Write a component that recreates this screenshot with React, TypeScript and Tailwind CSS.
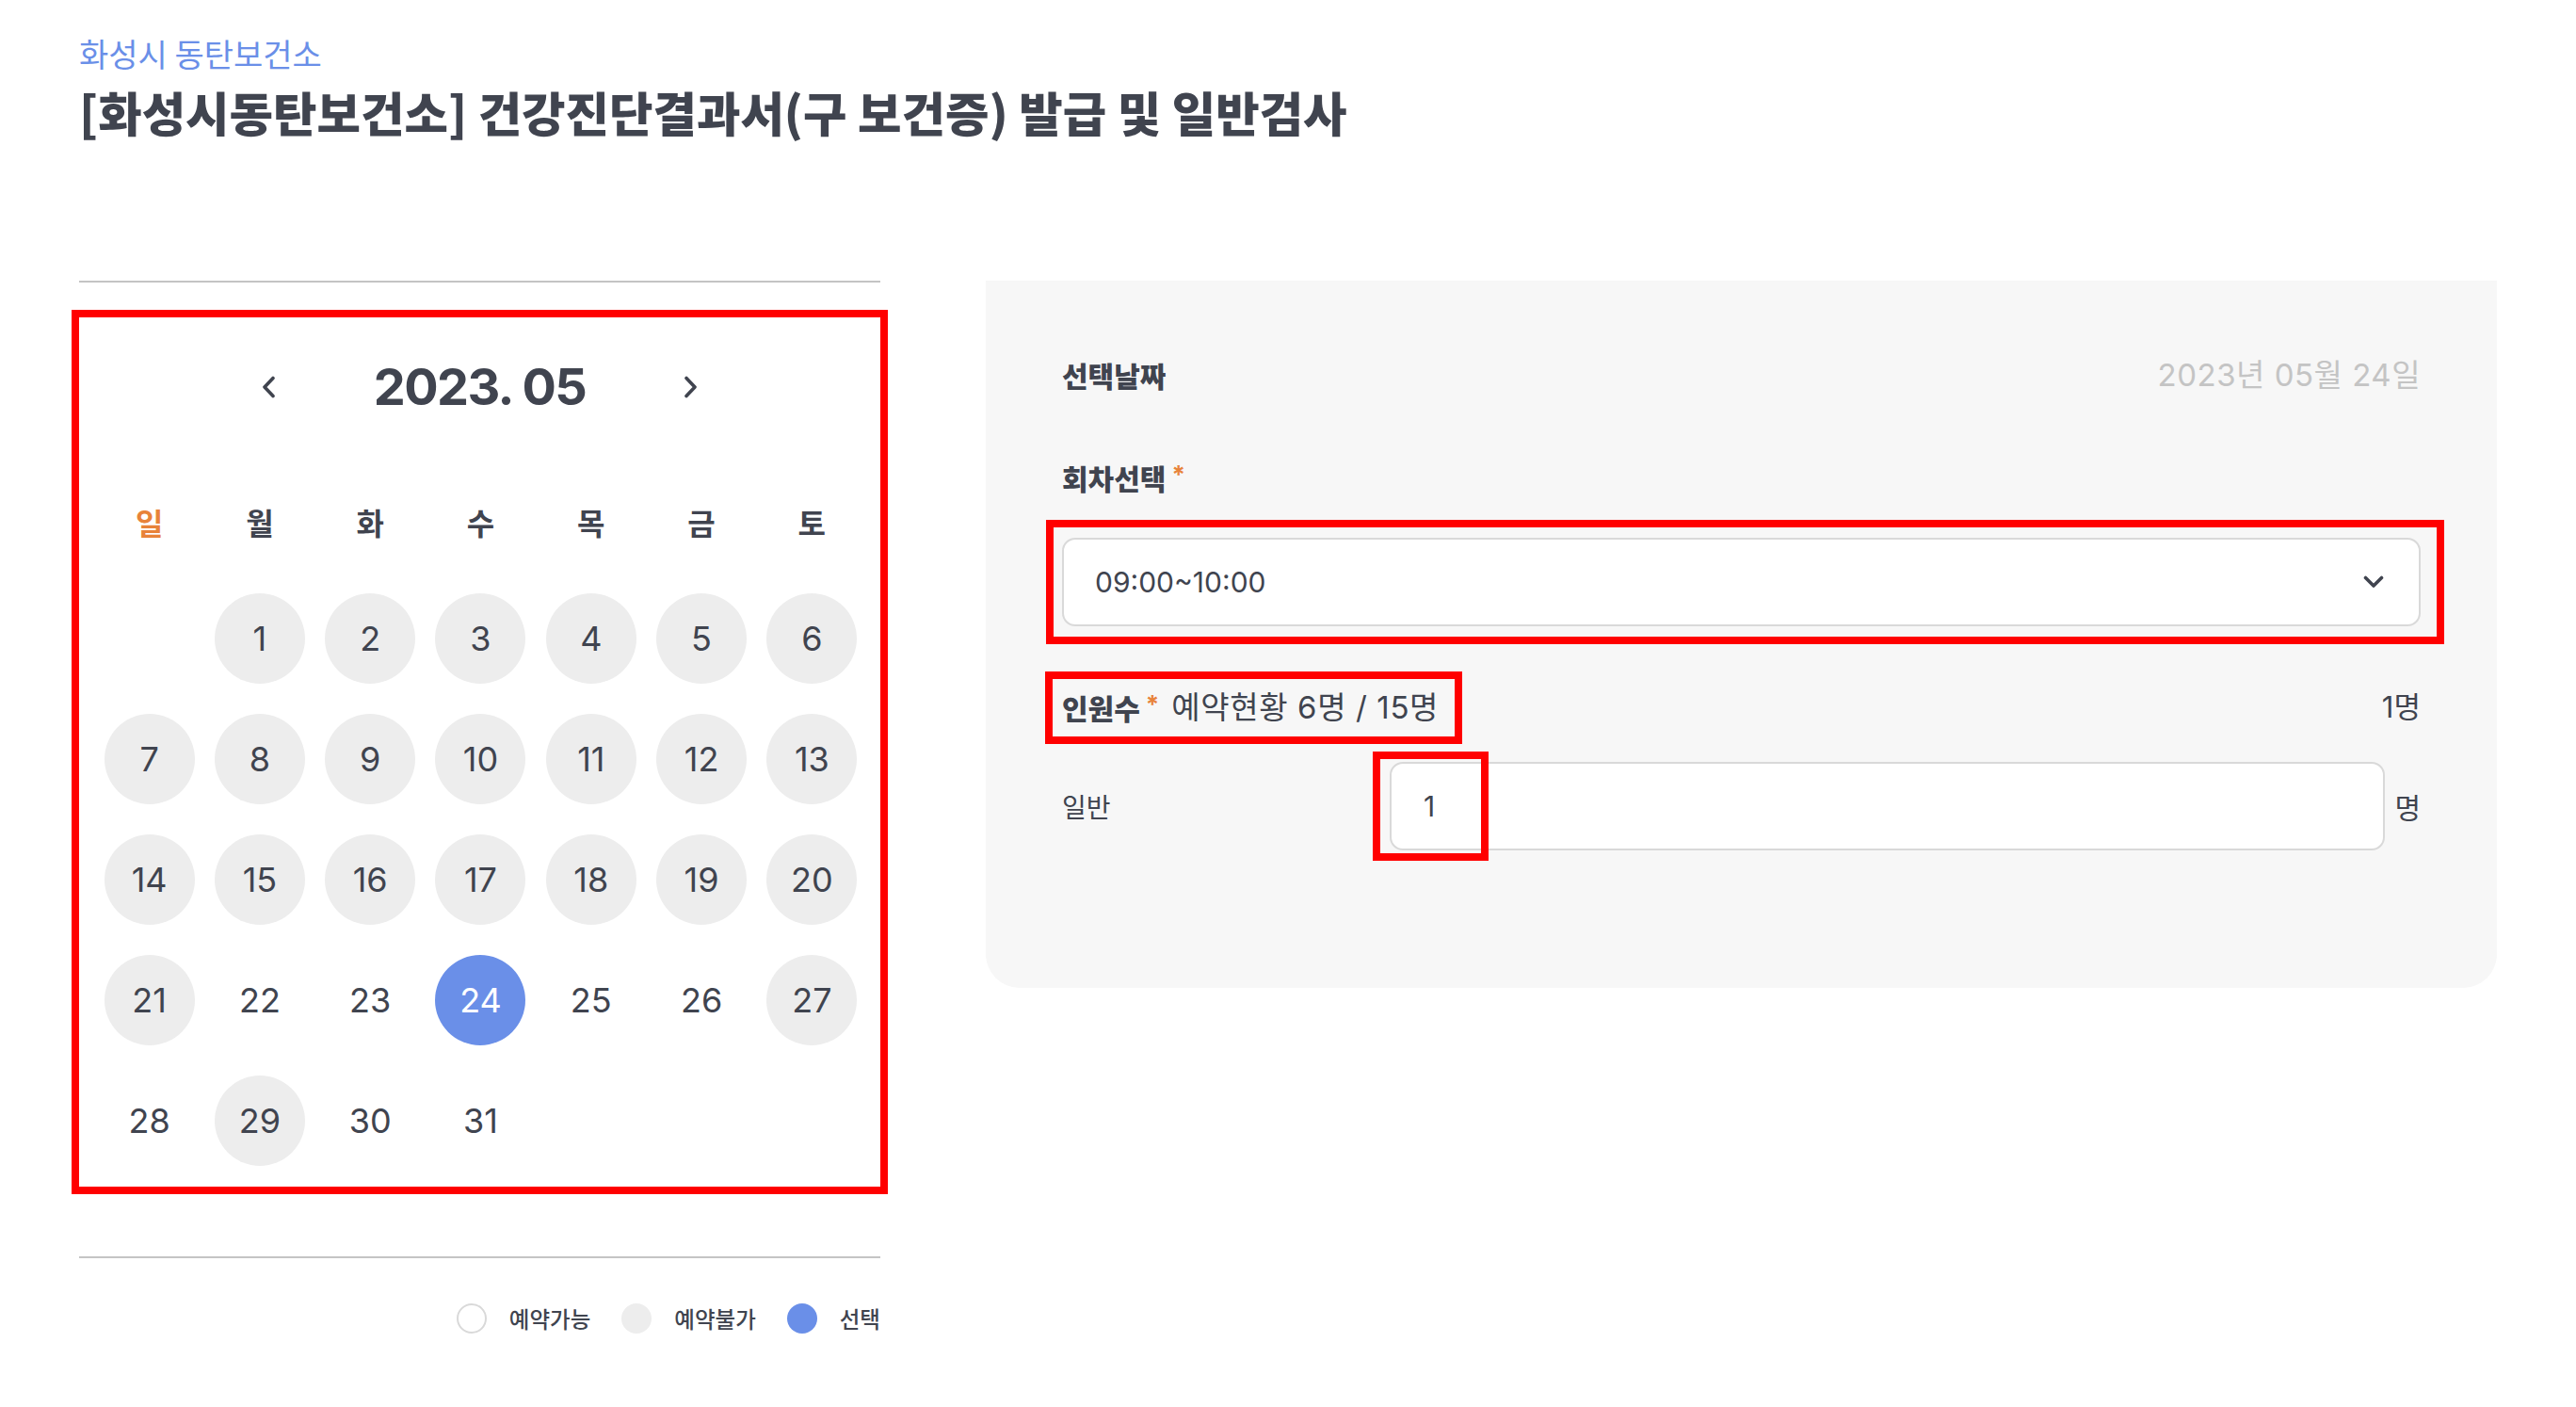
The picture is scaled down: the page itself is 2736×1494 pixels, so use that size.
import React from "react";

const TEXT = "text-[#40444f]";

type Day = { n: number | null; s: "gray" | "white" | "sel" };

const grayDays = new Set([1,2,3,4,5,6,7,8,9,10,11,12,13,14,15,16,17,18,19,20,21,27,29]);

function buildDays(): Day[] {
  const days: Day[] = [{ n: null, s: "white" }];
  for (let i = 1; i <= 31; i++) {
    days.push({ n: i, s: i === 24 ? "sel" : grayDays.has(i) ? "gray" : "white" });
  }
  return days;
}

function ChevronLeft() {
  return (
    <svg width="16" height="24" viewBox="0 0 16 24" fill="none">
      <polyline points="13,2.5 4,12 13,21.5" stroke="#40444f" strokeWidth="3.6" strokeLinecap="round" strokeLinejoin="round" />
    </svg>
  );
}
function ChevronRight() {
  return (
    <svg width="16" height="24" viewBox="0 0 16 24" fill="none">
      <polyline points="3,2.5 12,12 3,21.5" stroke="#40444f" strokeWidth="3.6" strokeLinecap="round" strokeLinejoin="round" />
    </svg>
  );
}
function ChevronDown() {
  return (
    <svg width="22" height="14" viewBox="0 0 22 14" fill="none">
      <polyline points="2.5,2.5 11,11 19.5,2.5" stroke="#40444f" strokeWidth="3.6" strokeLinecap="round" strokeLinejoin="round" />
    </svg>
  );
}

export default function App() {
  const days = buildDays();
  const weekdays = ["일", "월", "화", "수", "목", "금", "토"];
  return (
    <div className={`w-[2736px] min-h-[1494px] bg-white font-['Inter','Noto_Sans_CJK_KR',sans-serif] ${TEXT}`}>
      <div className="px-[84px] pt-[32px]">
        <div className="text-[34px] leading-[50px] text-[#6a8fe8] font-['Noto_Sans_CJK_KR',sans-serif]">화성시 동탄보건소</div>
        <div className="text-[50.5px] leading-[72px] font-black font-['Noto_Sans_CJK_KR',sans-serif]">
          [화성시동탄보건소] 건강진단결과서(구 보건증) 발급 및 일반검사
        </div>

        <div className="mt-[144px] flex items-start gap-[112px]">
          {/* Left: calendar */}
          <div className="w-[851px] flex flex-col">
            <div className="h-[2px] bg-[#c4c4c4]" />
            <div className="mt-[29px] -mx-[8px] border-[8px] border-[#ff0000] pt-[44px] pb-[22px]">
              <div className="h-[60px] flex items-center justify-center gap-[104px]">
                <ChevronLeft />
                <div className="text-[54px] leading-[60px] font-bold tracking-[-1.6px]">2023. 05</div>
                <ChevronRight />
              </div>
              <div className="mt-[93px] grid grid-cols-7 pl-[16px] pr-[14px]">
                {weekdays.map((w, i) => (
                  <div
                    key={w}
                    className={`h-[40px] flex items-center justify-center text-[32px] leading-[40px] font-bold font-['Noto_Sans_CJK_KR',sans-serif] ${i === 0 ? "text-[#e8833a]" : ""}`}
                  >
                    {w}
                  </div>
                ))}
              </div>
              <div className="mt-[56px] grid grid-cols-7 gap-y-[32px] pl-[16px] pr-[14px]">
                {days.map((d, i) => (
                  <div key={i} className="h-[96px] flex items-center justify-center">
                    {d.n !== null && (
                      <div
                        className={`w-[96px] h-[96px] rounded-full flex items-center justify-center text-[36px] leading-none ${
                          d.s === "sel"
                            ? "bg-[#6a8fe8] text-white"
                            : d.s === "gray"
                            ? "bg-[#ededed]"
                            : ""
                        }`}
                      >
                        {d.n}
                      </div>
                    )}
                  </div>
                ))}
              </div>
            </div>
            <div className="mt-[66px] h-[2px] bg-[#c4c4c4]" />
            <div className="mt-[48px] flex items-center justify-end gap-[33px] text-[23.5px] leading-[32px] font-medium font-['Noto_Sans_CJK_KR',sans-serif]">
              <div className="flex items-center gap-[24px]">
                <div className="w-[32px] h-[32px] rounded-full border-2 border-[#d9d9d9] bg-white" />
                <span>예약가능</span>
              </div>
              <div className="flex items-center gap-[24px]">
                <div className="w-[32px] h-[32px] rounded-full bg-[#ededed]" />
                <span>예약불가</span>
              </div>
              <div className="flex items-center gap-[24px]">
                <div className="w-[32px] h-[32px] rounded-full bg-[#6a8fe8]" />
                <span>선택</span>
              </div>
            </div>
          </div>

          {/* Right: panel */}
          <div className="w-[1605px] bg-[#f7f7f7] rounded-b-[36px] px-[81px] pt-[80px] pb-[146px]">
            <div className="flex items-center justify-between h-[40px]">
              <div className="text-[30px] leading-[40px] font-black font-['Noto_Sans_CJK_KR',sans-serif]">선택날짜</div>
              <div className="text-[33px] leading-[40px] text-[#c4c4c4] tracking-[0.5px]">2023년 05월 24일</div>
            </div>

            <div className="mt-[69px] h-[40px] flex items-start">
              <span className="text-[30px] leading-[40px] font-black font-['Noto_Sans_CJK_KR',sans-serif]">회차선택</span>
              <span className="ml-[6px] mt-[4px] text-[26px] leading-none font-bold text-[#e8833a]">*</span>
            </div>

            <div className="relative mt-[44px] h-[94px]">
              <div className="h-full bg-white border-2 border-[#d9d9d9] rounded-[14px] flex items-center justify-between pl-[33px] pr-[37px]">
                <span className="text-[30px] leading-[40px]">09:00~10:00</span>
                <ChevronDown />
              </div>
              <div className="pointer-events-none absolute left-[-17px] top-[-19px] right-[-25px] bottom-[-19px] border-[8px] border-[#ff0000]" />
            </div>

            <div className="mt-[66px] h-[40px] flex items-center justify-between">
              <div className="relative inline-flex items-start h-[40px]">
                <span className="text-[30px] leading-[40px] font-black font-['Noto_Sans_CJK_KR',sans-serif]">인원수</span>
                <span className="ml-[6px] mt-[4px] text-[26px] leading-none font-bold text-[#e8833a]">*</span>
                <span className="ml-[13px] text-[33px] leading-[40px] tracking-[0.6px]">예약현황 6명 / 15명</span>
                <div className="pointer-events-none absolute left-[-18px] top-[-18px] right-[-25px] bottom-[-19px] border-[8px] border-[#ff0000]" />
              </div>
              <div className="text-[31px] leading-[40px]">1명</div>
            </div>

            <div className="mt-[38px] flex items-center">
              <div className="w-[348px] text-[28px] leading-[40px] font-['Noto_Sans_CJK_KR',sans-serif]">일반</div>
              <div className="relative flex-1 h-[94px]">
                <div className="h-full bg-white border-2 border-[#d9d9d9] rounded-[14px] flex items-center pl-[34px]">
                  <span className="text-[30px] leading-[40px]">1</span>
                </div>
                <div className="pointer-events-none absolute left-[-18px] top-[-11px] bottom-[-11px] w-[123px] border-[8px] border-[#ff0000]" />
              </div>
              <div className="w-[38px] text-right text-[30px] leading-[40px] font-['Noto_Sans_CJK_KR',sans-serif]">명</div>
            </div>
          </div>
        </div>
      </div>
    </div>
  );
}
